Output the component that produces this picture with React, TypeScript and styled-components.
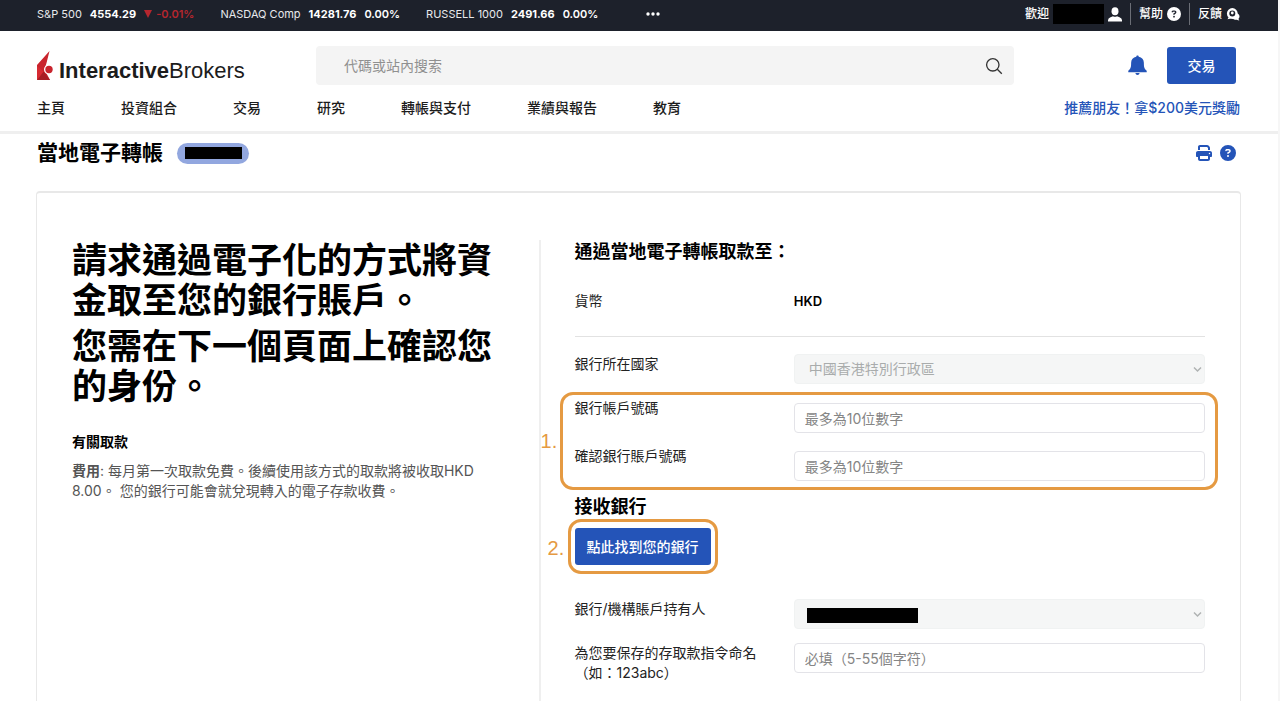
import React from 'react';
import styled, { createGlobalStyle } from 'styled-components';
import { FaCircleQuestion, FaPrint } from 'react-icons/fa6';

const BLUE = '#2454b8';
const ORANGE = '#e59a42';

const GlobalStyle = createGlobalStyle`
  * { box-sizing: border-box; }
  body {
    margin: 0;
    background: #fff;
    color: #000;
    font: 400 14px/20px Inter, 'Noto Sans CJK TC', sans-serif;
  }
  h1, h2, h3, p, ul { margin: 0; padding: 0; }
  ul { list-style: none; }
  a { color: inherit; text-decoration: none; }
  button, input, select { font: inherit; }
`;

const Page = styled.div`
  display: flex;
  flex-direction: column;
  min-height: 100vh;
  border-right: 2px solid #f6f6f6;
`;

const TopBar = styled.div`
  display: flex;
  align-items: center;
  justify-content: space-between;
  height: 31px;
  padding: 0 38px 3px 37px;
  background: #1d212b;
  color: #e8e9ec;
  font-size: 12px;
`;

const Tickers = styled.ul`
  display: flex;
  align-items: center;
  gap: 26px;
  font-size: 11px;
`;

const Ticker = styled.li`
  display: flex;
  align-items: center;
  gap: 8px;
`;

const Quote = styled.strong`
  font-weight: 700;
  color: #fff;
`;

const Change = styled.span<{ $down?: boolean }>`
  display: flex;
  align-items: center;
  gap: 4px;
  font-weight: 600;
  color: ${(p) => (p.$down ? '#b5262e' : '#fff')};
`;

const MoreButton = styled.button`
  display: flex;
  margin-left: 22px;
  padding: 0;
  border: 0;
  background: none;
  color: #fff;
`;

const UserMenu = styled.div`
  display: flex;
  align-items: center;
`;

const UserItem = styled.a`
  display: flex;
  align-items: center;
  gap: 4px;
  height: 22px;
  padding: 0 8px;
  color: #fff;
  font-weight: 500;
  & + & { border-left: 1px solid #6b6e76; }
  &:last-child { padding-right: 0; }
`;

const Redaction = styled.span<{ $w: number; $h: number }>`
  display: block;
  width: ${(p) => p.$w}px;
  height: ${(p) => p.$h}px;
  background: #000;
`;

const Header = styled.header`
  padding: 15px 38px 0 37px;
  border-bottom: 3px solid #efefef;
`;

const HeaderRow = styled.div`
  display: flex;
  align-items: center;
  height: 39px;
`;

const Logo = styled.a`
  display: flex;
  align-items: flex-end;
  gap: 4px;
  width: 279px;
  color: #1c1c1c;
  font: 400 22px/20px 'Liberation Sans', Arial, sans-serif;
`;

const SearchForm = styled.form`
  display: flex;
  align-items: center;
  flex: 1;
  height: 39px;
  padding: 0 11px 0 28px;
  border-radius: 4px;
  background: #f4f4f4;
`;

const SearchInput = styled.input`
  flex: 1;
  padding: 0;
  border: 0;
  outline: 0;
  background: none;
  &::placeholder { color: #909090; opacity: 1; }
`;

const IconButton = styled.button`
  display: flex;
  padding: 0;
  border: 0;
  background: none;
  color: ${BLUE};
`;

const HeaderActions = styled.div`
  display: flex;
  align-items: center;
  gap: 20px;
  padding: 0 4px 0 114px;
`;

const Button = styled.button`
  border: 0;
  border-radius: 3px;
  background: ${BLUE};
  color: #fff;
  font-weight: 500;
`;

const TradeButton = styled(Button)`
  width: 69px;
  height: 37px;
`;

const NavRow = styled.nav`
  display: flex;
  justify-content: space-between;
  padding: 13px 0 13px;
  font-weight: 500;
  color: #1c1c1c;
`;

const NavList = styled.ul`
  display: flex;
  gap: 56px;
`;

const ReferLink = styled.a`
  color: ${BLUE};
`;

const TitleRow = styled.div`
  display: flex;
  align-items: center;
  height: 38px;
  padding: 0 42px 0 37px;
`;

const Title = styled.h1`
  font-size: 21px;
  line-height: 30px;
  font-weight: 700;
`;

const AccountPill = styled.span`
  display: flex;
  align-items: center;
  justify-content: center;
  width: 72px;
  height: 21px;
  margin-left: 14px;
  border-radius: 11px;
  background: #92a7df;
`;

const TitleActions = styled.div`
  display: flex;
  gap: 8px;
  margin-left: auto;
`;

const Card = styled.main`
  display: grid;
  grid-template-columns: 7fr 10fr;
  flex: 1;
  margin: 19px 37px 0 36px;
  padding: 47px 35px 0;
  border: 1px solid #e8e8e8;
  border-width: 2px 1px 0;
  border-radius: 4px 4px 0 0;
`;

const Intro = styled.section`
  padding-right: 36px;
  color: #555;
`;

const Headline = styled.p`
  margin-bottom: 6px;
  color: #000;
  font-size: 35px;
  line-height: 40px;
  font-weight: 700;
`;

const AboutTitle = styled.h3`
  margin: 26px 0 9px;
  color: #000;
  font-size: 14px;
  line-height: 20px;
  font-weight: 700;
`;

const Form = styled.form`
  padding-left: 34px;
  border-left: 2px solid #efefef;
  color: #222;
`;

const SectionTitle = styled.h2`
  color: #000;
  font-size: 18px;
  line-height: 24px;
  font-weight: 700;
`;

const Row = styled.div<{ $top?: number }>`
  display: grid;
  grid-template-columns: 8fr 15fr;
  align-items: start;
  margin-top: ${(p) => p.$top ?? 14}px;
`;

const Divider = styled.hr`
  height: 1px;
  margin: 25px 0 0;
  border: 0;
  background: #e2e2e2;
`;

const Currency = styled.strong`
  color: #000;
  font-size: 13px;
  font-weight: 600;
`;

const Indent = styled.span`
  display: block;
`;

const TextInput = styled.input<{ $top?: number }>`
  width: 100%;
  height: 30px;
  margin-top: ${(p) => p.$top ?? 0}px;
  padding: 0 10px;
  border: 1px solid #e3e3e8;
  border-radius: 4px;
  background: #fff;
  &::placeholder { color: #858585; opacity: 1; }
`;

const SelectWrap = styled.div`
  position: relative;
`;

const Select = styled.select`
  display: block;
  width: 100%;
  height: 30px;
  padding: 0 14px;
  border: 1px solid #f0f2f2;
  border-radius: 4px;
  appearance: none;
  background: #f5f6f6;
  color: #a9acac;
  opacity: 1;
`;

const SelectArrow = styled.svg`
  position: absolute;
  top: 12px;
  right: 3px;
`;

const SelectCover = styled.div`
  position: absolute;
  top: 9px;
  left: 13px;
`;

const Marked = styled.div<{ $inline?: boolean }>`
  position: relative;
  display: ${(p) => (p.$inline ? 'inline-block' : 'block')};
  margin-top: ${(p) => (p.$inline ? 9 : 14)}px;
`;

const MarkFrame = styled.div<{ $inset: string }>`
  position: absolute;
  inset: ${(p) => p.$inset};
  border: 3px solid ${ORANGE};
  border-radius: 13px;
  pointer-events: none;
`;

const MarkNumber = styled.span<{ $left: number }>`
  position: absolute;
  top: 50%;
  left: ${(p) => p.$left}px;
  margin-top: -9px;
  color: ${ORANGE};
  font: 400 20px/20px 'Liberation Sans', Arial, sans-serif;
`;

const FindBankButton = styled(Button)`
  display: block;
  height: 37px;
  padding: 0 12px;
`;

const BankTitle = styled(SectionTitle)`
  margin-top: 14px;
`;

const nav = ['主頁', '投資組合', '交易', '研究', '轉帳與支付', '業績與報告', '教育'];

const tickers = [
  { name: 'S&P 500', price: '4554.29', change: '-0.01%', down: true },
  { name: 'NASDAQ Comp', price: '14281.76', change: '0.00%' },
  { name: 'RUSSELL 1000', price: '2491.66', change: '0.00%' },
];

const Arrow = () => (
  <SelectArrow width="9" height="7" viewBox="0 0 9 7" fill="none" stroke="#b0b3b3" strokeWidth="1.5">
    <path d="M1 1.5 4.5 5 8 1.5" />
  </SelectArrow>
);

export default function App() {
  return (
    <>
      <GlobalStyle />
      <Page>
        <TopBar>
          <Tickers>
            {tickers.map((t) => (
              <Ticker key={t.name}>
                <span>{t.name}</span>
                <Quote>{t.price}</Quote>
                <Change $down={t.down}>
                  {t.down && (
                    <svg width="8" height="8" viewBox="0 0 8 8" fill="currentColor">
                      <path d="M0 0h8L4 8z" />
                    </svg>
                  )}
                  {t.change}
                </Change>
              </Ticker>
            ))}
            <li>
              <MoreButton type="button" aria-label="更多">
                <svg width="14" height="4" viewBox="0 0 14 4" fill="currentColor">
                  <circle cx="2" cy="2" r="1.7" />
                  <circle cx="7" cy="2" r="1.7" />
                  <circle cx="12" cy="2" r="1.7" />
                </svg>
              </MoreButton>
            </li>
          </Tickers>
          <UserMenu>
            <UserItem href="#user">
              歡迎
              <Redaction $w={51} $h={20} />
              <svg width="14" height="15" viewBox="0 0 14 15" fill="currentColor">
                <ellipse cx="7" cy="4.2" rx="3.5" ry="4" />
                <path d="M0 14.5v-1.2Q0 11 2.500 10.200L5 9.300q2 1 4 0l2.500.9Q14 11 14 13.300v1.200z" />
              </svg>
            </UserItem>
            <UserItem href="#help">
              幫助
              <FaCircleQuestion size={14} />
            </UserItem>
            <UserItem href="#feedback">
              反饋
              <svg width="14" height="13" viewBox="0 0 14 13">
                <path
                  d="M9 5c2.800 0 4.500 1.400 4.500 3.400 0 .9-.4 1.700-1 2.300.1.700.4 1.300.9 1.800-1 0-1.800-.3-2.500-.7-1.800.2-3.300-.3-4.200-1.300z"
                  fill="#fff"
                />
                <circle cx="6.300" cy="5.500" r="4.200" fill="#1d212b" stroke="#fff" strokeWidth="2.400" />
                <path d="M3 8.500 1.500 11.300l3.500-.8z" fill="#fff" />
                <circle cx="6.300" cy="5" r="1.400" fill="#fff" />
              </svg>
            </UserItem>
          </UserMenu>
        </TopBar>

        <Header>
          <HeaderRow>
            <Logo href="#home">
              <svg width="18" height="30" viewBox="0 0 18 30">
                <path d="M12.500 0 0 14v15h13L7.500 18.500 9.500 12z" fill="#c9242d" />
                <path d="M0 29 6.500 20.500 13 29z" fill="#a81d25" />
                <path d="M0 29V15l6.500 5.500z" fill="#d62a32" />
                <circle cx="12" cy="18.500" r="5" fill="#fff" />
                <circle cx="12" cy="18.500" r="3.700" fill="#c9242d" />
              </svg>
              <span>
                <b>Interactive</b>Brokers
              </span>
            </Logo>
            <SearchForm role="search">
              <SearchInput type="text" aria-label="代碼或站內搜索" placeholder="代碼或站內搜索" />
              <IconButton type="button" aria-label="搜索">
                <svg width="18" height="18" viewBox="0 0 18 18" fill="none" stroke="#333" strokeWidth="1.300">
                  <circle cx="7.800" cy="7.800" r="6.200" />
                  <path d="m12.300 12.300 4.500 4.500" />
                </svg>
              </IconButton>
            </SearchForm>
            <HeaderActions>
              <IconButton type="button" aria-label="通知">
                <svg width="19" height="21" viewBox="0 0 20 21" fill="currentColor">
                  <path d="M10 0c.8 0 1.300.5 1.300 1.200 3.300.6 5.400 3 5.400 6.300 0 4.500.4 6.300 3 8.600v1.400H.3v-1.400c2.600-2.300 3-4.100 3-8.600 0-3.300 2.100-5.700 5.400-6.300C8.700.5 9.200 0 10 0zM7.800 18.500h4.400c-.2 1.300-1 2-2.200 2s-2-.7-2.200-2z" />
                </svg>
              </IconButton>
              <TradeButton type="button">交易</TradeButton>
            </HeaderActions>
          </HeaderRow>
          <NavRow>
            <NavList>
              {nav.map((n) => (
                <li key={n}>
                  <a href={`#${n}`}>{n}</a>
                </li>
              ))}
            </NavList>
            <ReferLink href="#refer">推薦朋友！拿$200美元獎勵</ReferLink>
          </NavRow>
        </Header>

        <TitleRow>
          <Title>當地電子轉帳</Title>
          <AccountPill>
            <Redaction $w={57} $h={12} />
          </AccountPill>
          <TitleActions>
            <IconButton type="button" aria-label="列印">
              <FaPrint size={16} />
            </IconButton>
            <IconButton type="button" aria-label="說明">
              <FaCircleQuestion size={16} />
            </IconButton>
          </TitleActions>
        </TitleRow>

        <Card>
          <Intro>
            <Headline>請求通過電子化的方式將資金取至您的銀行賬戶。</Headline>
            <Headline>您需在下一個頁面上確認您的身份。</Headline>
            <AboutTitle>有關取款</AboutTitle>
            <p>
              <b>費用</b>: 每月第一次取款免費。後續使用該方式的取款將被收取HKD 8.00。 您的銀行可能會就兌現轉入的電子存款收費。
            </p>
          </Intro>

          <Form>
            <SectionTitle>通過當地電子轉帳取款至：</SectionTitle>
            <Row $top={27}>
              <span>貨幣</span>
              <Currency>HKD</Currency>
            </Row>
            <Divider />
            <Row $top={17}>
              <label htmlFor="country">銀行所在國家</label>
              <SelectWrap>
                <Select id="country" disabled>
                  <option>中國香港特別行政區</option>
                </Select>
                <Arrow />
              </SelectWrap>
            </Row>

            <Marked>
              <Row $top={0}>
                <label htmlFor="account">銀行帳戶號碼</label>
                <TextInput id="account" $top={5} placeholder="最多為10位數字" />
              </Row>
              <Row $top={13}>
                <label htmlFor="confirm">確認銀行賬戶號碼</label>
                <TextInput id="confirm" $top={5} placeholder="最多為10位數字" />
              </Row>
              <MarkFrame $inset="-6px -13px -9px -15px" />
              <MarkNumber $left={-34}>1.</MarkNumber>
            </Marked>

            <BankTitle>接收銀行</BankTitle>
            <Marked $inline>
              <FindBankButton type="button">點此找到您的銀行</FindBankButton>
              <MarkFrame $inset="-9px -7px -9px -7px" />
              <MarkNumber $left={-27}>2.</MarkNumber>
            </Marked>

            <Row $top={34}>
              <label htmlFor="holder">銀行/機構賬戶持有人</label>
              <SelectWrap>
                <Select id="holder" disabled />
                <SelectCover>
                  <Redaction $w={111} $h={15} />
                </SelectCover>
                <Arrow />
              </SelectWrap>
            </Row>
            <Row>
              <label htmlFor="nickname">
                為您要保存的存取款指令命名
                <Indent>（如：123abc）</Indent>
              </label>
              <TextInput id="nickname" placeholder="必填（5-55個字符）" />
            </Row>
          </Form>
        </Card>
      </Page>
    </>
  );
}
